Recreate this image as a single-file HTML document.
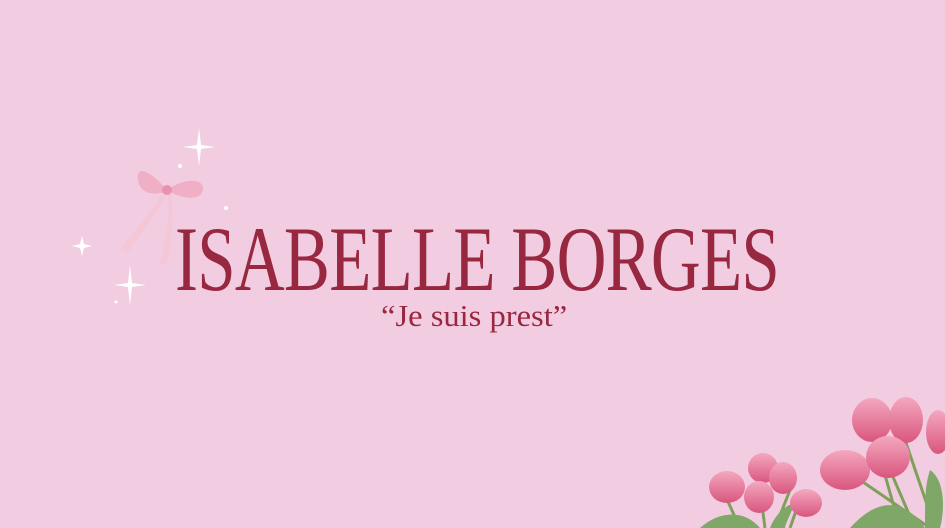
<!DOCTYPE html>
<html><head><meta charset="utf-8"><style>
html,body{margin:0;padding:0}
body{width:945px;height:528px;overflow:hidden;position:relative;background:#f2cde2;font-family:"Liberation Serif",serif}
.t{position:absolute;left:175px;top:213px;font-size:92px;line-height:92px;color:#98283f;white-space:nowrap;transform-origin:0 0;transform:scaleX(0.75);letter-spacing:-1px}
.s{position:absolute;left:381px;top:299px;font-size:31px;line-height:34px;color:#98283f;white-space:nowrap;transform-origin:0 0;transform:scaleX(1.05)}
svg{position:absolute;left:0;top:0}
</style></head><body>
<div class="t">ISABELLE BORGES</div>
<div class="s">“Je suis prest”</div>
<svg width="945" height="528" viewBox="0 0 945 528">
<defs>
<linearGradient id="tp" x1="0" y1="0" x2="0" y2="1"><stop offset="0" stop-color="#f4a8c0"/><stop offset="1" stop-color="#d9567e"/></linearGradient>
</defs>
<g fill="#fff">
<path d="M199 128 L201 145 L215 147 L201 149 L199 166 L197 149 L183 147 L197 145Z"/>
<path d="M130 265 L132 283 L146 285 L132 287 L130 305 L128 287 L114 285 L128 283Z"/>
<path d="M82 236 L84 244 L92 246 L84 248 L82 256 L80 248 L72 246 L80 244Z"/>
<circle cx="180" cy="166" r="2"/><circle cx="226" cy="208" r="2"/><circle cx="116" cy="302" r="1.5"/>
</g>
<g fill="#f1aac0" opacity=".85">
<path d="M165 188 C150 170 135 165 138 180 C140 195 155 195 165 192Z"/>
<path d="M170 188 C185 178 205 178 203 190 C200 202 182 198 170 192Z"/>
<path d="M163 192 C150 215 130 235 120 250 L128 252 C140 235 155 215 166 196Z" fill="#f5c6d4"/>
<path d="M168 194 C170 215 165 240 160 265 L168 262 C172 240 174 215 171 194Z" fill="#f5c6d4"/>
<circle cx="167" cy="190" r="5" fill="#e88aa6"/>
</g>
<g stroke="#7fa05a" stroke-width="3" fill="none">
<path d="M725 495 L740 528"/><path d="M760 490 L765 528"/><path d="M790 490 L775 528"/><path d="M860 480 L930 528"/><path d="M890 470 L915 528"/><path d="M905 440 L935 528"/><path d="M875 440 L900 528"/><path d="M798 505 L790 528"/>
</g>
<g fill="#7fa868">
<path d="M700 528 C720 510 745 510 760 528Z"/><path d="M850 528 C880 495 905 500 925 528Z"/><path d="M930 470 C945 480 945 510 940 528 L925 528 C925 500 925 485 930 470Z"/><path d="M770 528 C775 515 785 505 795 503 C790 515 785 525 785 528Z"/>
</g>
<g fill="url(#tp)">
<ellipse cx="727" cy="487" rx="18" ry="16"/>
<ellipse cx="763" cy="468" rx="15" ry="15"/>
<ellipse cx="783" cy="478" rx="14" ry="16"/>
<ellipse cx="759" cy="497" rx="15" ry="16"/>
<ellipse cx="806" cy="503" rx="16" ry="14"/>
<ellipse cx="845" cy="470" rx="25" ry="20"/>
<ellipse cx="872" cy="420" rx="20" ry="22"/>
<ellipse cx="906" cy="420" rx="17" ry="23"/>
<ellipse cx="888" cy="457" rx="22" ry="21"/>
<ellipse cx="938" cy="432" rx="12" ry="22"/>
</g>
</svg>
</body></html>
